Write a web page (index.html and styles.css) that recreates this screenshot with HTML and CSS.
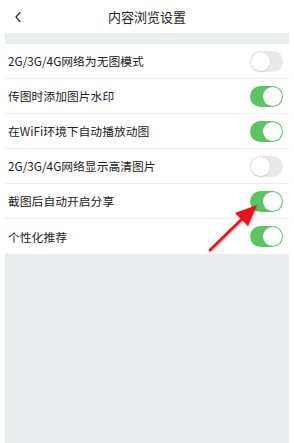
FILE: index.html
```html
<!DOCTYPE html>
<html lang="zh-CN">
<head>
<meta charset="utf-8">
<title>内容浏览设置</title>
<link rel="stylesheet" href="styles.css">
</head>
<body>
<div class="page">
  <header class="header">
    <span class="back"><svg width="8" height="12" viewBox="0 0 8 12"><path d="M6 1.5 L2 6 L6 10.5" fill="none" stroke="#333" stroke-width="1.3" stroke-linecap="round" stroke-linejoin="round"/></svg></span>
    <h1 class="title">内容浏览设置</h1>
    <span></span>
  </header>
  <div class="gap"></div>
  <ul class="list">
    <li class="row"><span class="label">2G/3G/4G网络为无图模式</span><span class="toggle"></span></li>
    <li class="row"><span class="label">传图时添加图片水印</span><span class="toggle on"></span></li>
    <li class="row"><span class="label">在WiFi环境下自动播放动图</span><span class="toggle on"></span></li>
    <li class="row"><span class="label">2G/3G/4G网络显示高清图片</span><span class="toggle"></span></li>
    <li class="row"><span class="label">截图后自动开启分享</span><span class="toggle on"></span></li>
    <li class="row"><span class="label">个性化推荐</span><span class="toggle on"></span></li>
  </ul>
  <div class="filler"></div>
</div>
<svg class="arrow" width="294" height="443" viewBox="0 0 294 443">
  <defs>
    <filter id="sh" x="-20%" y="-20%" width="140%" height="140%">
      <feDropShadow dx="0.5" dy="1" stdDeviation="0.8" flood-color="#000" flood-opacity="0.35"/>
    </filter>
  </defs>
  <g filter="url(#sh)">
    <line x1="210" y1="250" x2="242" y2="219" stroke="#e8141a" stroke-width="2.6" stroke-linecap="round"/>
    <polygon points="257,205 235,213 248,226" fill="#e8141a"/>
  </g>
</svg>
</body>
</html>
```
FILE: styles.css
```css
html, body {
  margin: 0;
  padding: 0;
  background: #fff;
}
body {
  font-family: "Noto Sans CJK SC", "Noto Sans", sans-serif;
  color: #222;
  width: 294px;
  height: 443px;
  overflow: hidden;
  position: relative;
}
.page {
  padding: 0 5px;
}
.header {
  height: 33px;
  display: grid;
  grid-template-columns: 1fr auto 1fr;
  align-items: center;
}
.back {
  display: flex;
  align-items: center;
  padding-left: 9px;
}
.title {
  margin: 0;
  font-size: 13px;
  font-weight: 400;
  color: #222;
  line-height: 1;
}
.gap {
  height: 11px;
  background: #ecedef;
}
.list {
  list-style: none;
  margin: 0;
  padding: 0;
}
.row {
  height: 35px;
  box-sizing: border-box;
  display: flex;
  align-items: center;
  justify-content: space-between;
  padding: 0 6px 0 3px;
  border-bottom: 1px solid #eeeeee;
}
.row:last-child {
  border-bottom: none;
}
.label {
  font-size: 11.8px;
  line-height: 1;
  color: #222;
}
.toggle {
  position: relative;
  width: 33px;
  height: 21px;
  border-radius: 11px;
  background: #e9e9eb;
  box-sizing: border-box;
  flex: none;
}
.toggle::after {
  content: "";
  position: absolute;
  top: 1px;
  left: 1px;
  width: 19px;
  height: 19px;
  border-radius: 50%;
  background: #fff;
  box-shadow: 0 0 0 0.6px #d8d8d8, 0 1px 1.5px rgba(0,0,0,0.12);
}
.toggle.on {
  background: #5cc463;
}
.toggle.on::after {
  left: 13px;
  box-shadow: none;
}
.filler {
  height: 189px;
  background: #ecedef;
}
.arrow {
  position: absolute;
  left: 0;
  top: 0;
  pointer-events: none;
}
```
